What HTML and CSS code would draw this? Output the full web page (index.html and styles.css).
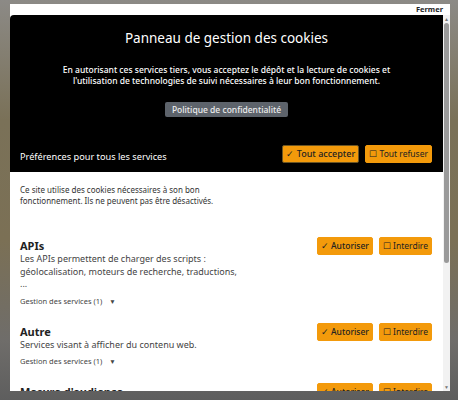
FILE: index.html
```html
<!DOCTYPE html>
<html lang="fr">
<head>
  <meta charset="UTF-8" />
  <title>Gestion des cookies</title>
  <meta name="viewport" content="width=device-width, initial-scale=1.0" />
  <link rel="stylesheet" href="styles.css">
</head>
<body>
  <div class="modal">
    <div class="modal__top">
      <span class="close">Fermer</span>
    </div>
    <div class="modal__frame">
      <div class="panel">
        <div class="panel__head">
          <h1>Panneau de gestion des cookies</h1>
          <p class="intro">En autorisant ces services tiers, vous acceptez le dépôt et la lecture de cookies et l'utilisation de technologies de suivi nécessaires à leur bon fonctionnement.</p>
          <button class="btn--policy">Politique de confidentialité</button>
          <div class="all">
            <span class="all__label">Préférences pour tous les services</span>
            <div class="btns">
              <button class="btn btn--focus">✓ Tout accepter</button>
              <button class="btn btn--off">☐ Tout refuser</button>
            </div>
          </div>
        </div>

        <div class="panel__body">
          <p class="mandatory">Ce site utilise des cookies nécessaires à son bon fonctionnement. Ils ne peuvent pas être désactivés.</p>

          <div class="cat">
            <div class="cat__info">
              <h2>APIs</h2>
              <p>Les APIs permettent de charger des scripts : géolocalisation, moteurs de recherche, traductions, ...</p>
              <div class="cat__more">Gestion des services (1) <span class="caret">▼</span></div>
            </div>
            <div class="btns">
              <button class="btn">✓ Autoriser</button>
              <button class="btn btn--off">☐ Interdire</button>
            </div>
          </div>

          <div class="cat">
            <div class="cat__info">
              <h2>Autre</h2>
              <p>Services visant à afficher du contenu web.</p>
              <div class="cat__more">Gestion des services (1) <span class="caret">▼</span></div>
            </div>
            <div class="btns">
              <button class="btn">✓ Autoriser</button>
              <button class="btn btn--off">☐ Interdire</button>
            </div>
          </div>

          <div class="cat">
            <div class="cat__info">
              <h2>Mesure d'audience</h2>
              <p>Les services de mesure d'audience permettent de générer des statistiques.</p>
            </div>
            <div class="btns">
              <button class="btn">✓ Autoriser</button>
              <button class="btn btn--off">☐ Interdire</button>
            </div>
          </div>
        </div>
      </div>

      <div class="scrollbar">
        <span class="arrow">▲</span>
        <div class="scrollbar__track"><div class="scrollbar__thumb"></div></div>
        <span class="arrow">▼</span>
      </div>
    </div>
  </div>
</body>
</html>
```

FILE: styles.css
```css
body {
  margin: 0;
  height: 400px;
  overflow: hidden;
  font-family: 'Noto Sans', sans-serif;
  background: linear-gradient(180deg, #8c8a86 0%, #7a7158 30%, #7b7055 60%, #6f6d6a 85%, #5e5e5e 100%);
}
.modal {
  margin: 4px 0 0 10px;
  width: 440px;
  height: 387px;
  background: #fff;
  display: flex;
  flex-direction: column;
}
.modal__top {
  height: 11px;
  flex-shrink: 0;
  text-align: right;
  padding-right: 7px;
  font-size: 7.5px;
  line-height: 11px;
}
.close {
  font-weight: bold;
  color: #222;
}
.modal__frame {
  flex: 1;
  display: flex;
  overflow: hidden;
}
.panel {
  flex: 1;
  overflow: hidden;
}
.panel__head {
  background: #000;
  color: #fff;
  text-align: center;
  border-top-left-radius: 4px;
  padding: 14px 0 0;
  height: 157px;
  box-sizing: border-box;
}
h1 {
  font-size: 13.5px;
  font-weight: 400;
  margin: 0 0 17px;
}
.intro {
  font-size: 8.5px;
  font-weight: 500;
  line-height: 11px;
  margin: 0 auto 10px;
  width: 344px;
}
.btn--policy {
  font-family: inherit;
  font-size: 8.5px;
  font-weight: 500;
  background: #5d636b;
  color: #eee;
  border: 0;
  border-radius: 2px;
  padding: 2px 7px;
}
.all {
  display: flex;
  justify-content: space-between;
  align-items: center;
  padding: 0 11px 0 10px;
  margin-top: 26px;
}
.all__label {
  font-size: 9.2px;
  margin-top: 6px;
}
.btns {
  display: flex;
  gap: 6px;
  flex-shrink: 0;
}
.btn {
  font-family: inherit;
  font-size: 8.5px;
  line-height: 12px;
  background: #f39a0b;
  color: #222;
  border: 1px solid #f39a0b;
  border-radius: 2px;
  padding: 2px 3px;
  font-weight: 500;
}
.btn--focus {
  font-size: 9px;
  border-color: #6b5523;
}
.btn--off {
  font-weight: 400;
}
.panel__body {
  padding: 12px 11px 0 10px;
  color: #333;
}
.mandatory {
  font-size: 8px;
  line-height: 11px;
  margin: 0 0 33px;
  width: 210px;
}
.cat {
  display: flex;
  justify-content: space-between;
  align-items: flex-start;
  margin-bottom: 17px;
}
.cat .btns {
  margin-top: -2px;
}
.cat__info {
  width: 225px;
}
h2 {
  font-size: 11px;
  font-weight: bold;
  margin: 0;
  line-height: 14px;
  color: #222;
}
.cat p {
  font-size: 9px;
  line-height: 12.5px;
  margin: 0 0 4px;
  color: #444;
}
.cat__more {
  font-size: 7.5px;
  color: #444;
  line-height: 12px;
}
.caret {
  font-size: 6.5px;
  margin-left: 5px;
}
.scrollbar {
  width: 7px;
  background: #f2f2f2;
  display: flex;
  flex-direction: column;
  align-items: center;
}
.arrow {
  font-size: 5px;
  color: #777;
  height: 8px;
  line-height: 8px;
}
.scrollbar__track {
  flex: 1;
  width: 5px;
}
.scrollbar__thumb {
  height: 240px;
  background: #9a9a9a;
  border-radius: 3px;
}
```
